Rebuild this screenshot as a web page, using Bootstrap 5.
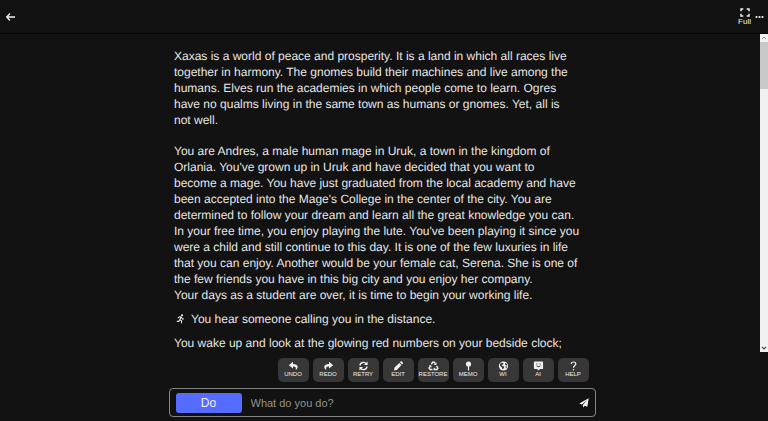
<!DOCTYPE html>
<html lang="en">
<head>
<meta charset="utf-8">
<meta name="viewport" content="width=device-width, initial-scale=1">
<title>Xaxas</title>
<link href="https://cdn.jsdelivr.net/npm/bootstrap@5.3.0/dist/css/bootstrap.min.css" rel="stylesheet">
<style>
  body { background: #121212; color: #e6e6e6; font-family: "Liberation Sans", Arial, sans-serif; font-size: 12px; line-height: 16px; text-rendering: geometricPrecision; }
  svg { display: block; fill: currentColor; }
  .topbar { height: 34px; border-bottom: 1px solid #060606; padding: 0 4px 0 5px; }
  .topbar .btn { color: #f2f2f2; font-size: 8px; line-height: 8px; border: 0; padding: 0; }
  .full-btn { gap: 1px; }
  .story-pane { min-height: 0; }
  .story-column { max-width: 420px; padding: 14px 0 0 4px; }
  .story-column p { margin: 0 0 15px; white-space: nowrap; }
  .story-column .story-action { margin: 0 0 8px; padding-left: 2px; gap: 6px; }
  .scroll-track { width: 8px; background: #f1f1f1; color: #505050; }
  .scroll-thumb { height: 47px; background: #c8c8c8; }
  .scroll-cap { height: 8px; padding: 2px 1px; }
  .composer { max-width: 427px; padding: 6px 0 4px; }
  .tools { gap: 4px; padding-right: 7px; margin-bottom: 6px; }
  .tool { width: 31px; height: 24px; border: 0; border-radius: 5px; background: #373737; color: #f0f0f0; font-size: 6px; line-height: 7px; padding: 0 0 1px; }
  .tool:hover { background: #484848; color: #fff; }
  .prompt { height: 29px; border: 1px solid #858585; border-radius: 4px; padding: 0 6px; }
  .btn-do { width: 66px; height: 20px; border: 0; border-radius: 3px; background: #566bff; color: #f0f0ff; font-size: 12px; line-height: 20px; padding: 0; }
  .prompt input { background: transparent; border: 0; color: #e6e6e6; font-size: 11px; line-height: 16px; padding: 0 9px; }
  .prompt input:focus { background: transparent; color: #fff; box-shadow: none; }
  .prompt input::placeholder { color: #929292; }
  .send { border: 0; padding: 0; color: #f2f2f2; }
</style>
<script src="https://cdn.jsdelivr.net/npm/bootstrap@5.3.0/dist/js/bootstrap.bundle.min.js" defer></script>
</head>
<body class="vh-100 d-flex flex-column overflow-hidden">
<header class="topbar d-flex align-items-center justify-content-between flex-shrink-0">
  <button class="btn" type="button" aria-label="Back"><svg width="11" height="10" viewBox="0 0 11 10"><path d="M5 1.5 1.7 5 5 8.500M2 5h8" fill="none" stroke="currentColor" stroke-width="1.3"/></svg></button>
  <div class="d-flex align-items-center gap-1">
    <button class="btn full-btn d-flex flex-column align-items-center" type="button"><svg width="10" height="9" viewBox="0 0 10 9"><path d="M1 3.200V1h2.300M6.700 1H9v2.200M9 5.800V8H6.700M3.300 8H1V5.800" fill="none" stroke="currentColor" stroke-width="1.400"/></svg>Full</button>
    <button class="btn" type="button" aria-label="More"><svg width="9" height="4" viewBox="0 0 9 4"><circle cx="1.500" cy="2" r="1.100"/><circle cx="4.500" cy="2" r="1.100"/><circle cx="7.500" cy="2" r="1.100"/></svg></button>
  </div>
</header>
<main class="story-pane d-flex flex-fill">
  <div class="flex-fill overflow-hidden">
    <div class="story-column mx-auto">
      <p>Xaxas is a world of peace and prosperity. It is a land in which all races live<br>together in harmony. The gnomes build their machines and live among the<br>humans. Elves run the academies in which people come to learn. Ogres<br>have no qualms living in the same town as humans or gnomes. Yet, all is<br>not well.</p>
      <p class="mb-2">You are Andres, a male human mage in Uruk, a town in the kingdom of<br>Orlania. You've grown up in Uruk and have decided that you want to<br>become a mage. You have just graduated from the local academy and have<br>been accepted into the Mage's College in the center of the city. You are<br>determined to follow your dream and learn all the great knowledge you can.<br>In your free time, you enjoy playing the lute. You've been playing it since you<br>were a child and still continue to this day. It is one of the few luxuries in life<br>that you can enjoy. Another would be your female cat, Serena. She is one of<br>the few friends you have in this big city and you enjoy her company.<br>Your days as a student are over, it is time to begin your working life.</p>
      <div class="story-action d-flex align-items-center"><svg width="9" height="10" viewBox="0 0 9 10"><circle cx="6" cy="1.300" r="1.100"/><path d="M1.800 4.200 3.300 2.900 5.200 3 6.400 4.900 8 5M5 3 3.900 5.600 5.700 7 5.400 9.300M3.800 5.700 2.800 7.400H.8" fill="none" stroke="currentColor" stroke-width="1.100" stroke-linejoin="round"/></svg><span>You hear someone calling you in the distance.</span></div>
      <p>You wake up and look at the glowing red numbers on your bedside clock;</p>
    </div>
  </div>
  <div class="scroll-track d-flex flex-column flex-shrink-0" aria-hidden="true">
    <div class="scroll-cap"><svg width="6" height="4" viewBox="0 0 6 4"><path d="m1 3 2-2 2 2" fill="none" stroke="#999"/></svg></div>
    <div class="scroll-thumb"></div>
    <div class="scroll-cap mt-auto"><svg width="6" height="4" viewBox="0 0 6 4"><path d="m1 1 2 2 2-2" fill="none" stroke="currentColor" stroke-width="1.200"/></svg></div>
  </div>
</main>
<footer class="flex-shrink-0 pe-1">
  <div class="composer mx-auto">
    <div class="tools d-flex justify-content-end">
      <button class="tool btn d-flex flex-column align-items-center justify-content-center" type="button"><svg width="11" height="10" viewBox="0 0 11 10"><path d="M5 .8.8 4.200 5 7.500V5.400c2.500-.1 3.300.8 2.700 3.500C10.900 6.800 10.400 2.900 5 2.900z"/></svg>UNDO</button>
      <button class="tool btn d-flex flex-column align-items-center justify-content-center" type="button"><svg width="11" height="10" viewBox="0 0 11 10"><path d="M6 .8 10.200 4.200 6 7.500V5.400C3.500 5.300 2.700 6.200 3.300 8.900.1 6.800.6 2.900 6 2.900z"/></svg>REDO</button>
      <button class="tool btn d-flex flex-column align-items-center justify-content-center" type="button"><svg width="11" height="10" viewBox="0 0 11 10"><path d="M2 4.500C2.300 1 6.500.5 8.400 2.800M9 5.500C8.700 9 4.500 9.500 2.600 7.200" fill="none" stroke="currentColor" stroke-width="1.400"/><path d="M9.600.5v3.600H6zM1.400 9.500V5.900H5z"/></svg>RETRY</button>
      <button class="tool btn d-flex flex-column align-items-center justify-content-center" type="button"><svg width="11" height="10" viewBox="0 0 11 10"><path d="m1 9.400.5-2.800 4.800-4.700 2.200 2.200-4.700 4.800zM6.900 1.300l.8-.7c.4-.4.8-.4 1.200 0l.9.9c.4.4.4.8 0 1.200l-.7.8z"/></svg>EDIT</button>
      <button class="tool btn d-flex flex-column align-items-center justify-content-center" type="button"><svg width="11" height="10" viewBox="0 0 11 10"><path d="M3.400 3.300 4.500 1.300h2l.9 1.500M8.600 4.900l1.200 2.200-.9 1.400H6.400M4.500 8.500H2L1.100 7.100l1.200-2" fill="none" stroke="currentColor" stroke-width="1.400"/><path d="m8.700 1.500-.5 2.700-2.500-.8zM6.900 6.500v3.300L5 8.300zM.8 4.800 3 4l.8 2.400z"/></svg>RESTORE</button>
      <button class="tool btn d-flex flex-column align-items-center justify-content-center" type="button"><svg width="11" height="10" viewBox="0 0 11 10"><circle cx="5.500" cy="3" r="2.600"/><path d="M4.900 5h1.200v4l-.6.9-.6-.9z"/></svg>MEMO</button>
      <button class="tool btn d-flex flex-column align-items-center justify-content-center" type="button"><svg width="11" height="10" viewBox="0 0 11 10"><circle cx="5.500" cy="5" r="4.600"/><path d="m2 2.700 1.800-1 1.700.5-.4 1.300-1.500.6.9.9 1.700.5-.3 1.600-1.300 1.300-.7-2-1.700-1.700zM7.200 1.700l2 1.500-.2 1.500-1.700-.8zM7.500 5.300l1.600.5-1.200 1.900z" fill="#373737"/></svg>WI</button>
      <button class="tool btn d-flex flex-column align-items-center justify-content-center" type="button"><svg width="11" height="10" viewBox="0 0 11 10"><path d="M1.600.5h7.800q.7 0 .7.700v6q0 .7-.7.700H7L5.500 9.600 4 7.900H1.600q-.7 0-.7-.7v-6q0-.7.7-.7z"/><path d="M3.300 2.500h1.100v1.100H3.300zM6.600 2.500h1.100v1.100H6.600zM3.200 4.800q2.300 2.800 4.600 0l-.5-.3q-1.800 1.500-3.600 0z" fill="#373737"/></svg>AI</button>
      <button class="tool btn d-flex flex-column align-items-center justify-content-center" type="button"><svg width="11" height="10" viewBox="0 0 11 10"><path d="M3.200 3Q3.300 1 5.500 1t2.300 1.900C7.800 4.500 5.500 4.500 5.500 6.700" fill="none" stroke="currentColor" stroke-width="1.200"/><circle cx="5.500" cy="8.700" r=".8"/></svg>HELP</button>
    </div>
    <form class="prompt d-flex align-items-center">
      <button class="btn btn-do flex-shrink-0" type="button">Do</button>
      <input class="form-control shadow-none" type="text" aria-label="What do you do?" placeholder="What do you do?">
      <button class="btn send flex-shrink-0" type="button" aria-label="Send"><svg width="10" height="10" viewBox="0 0 10 10"><path d="M9.700.3 8.300 8.800 5.700 7.700 4.200 9.600 3.800 7 8 2.200 2.900 6.600.3 5.500z"/></svg></button>
    </form>
  </div>
</footer>
</body>
</html>
